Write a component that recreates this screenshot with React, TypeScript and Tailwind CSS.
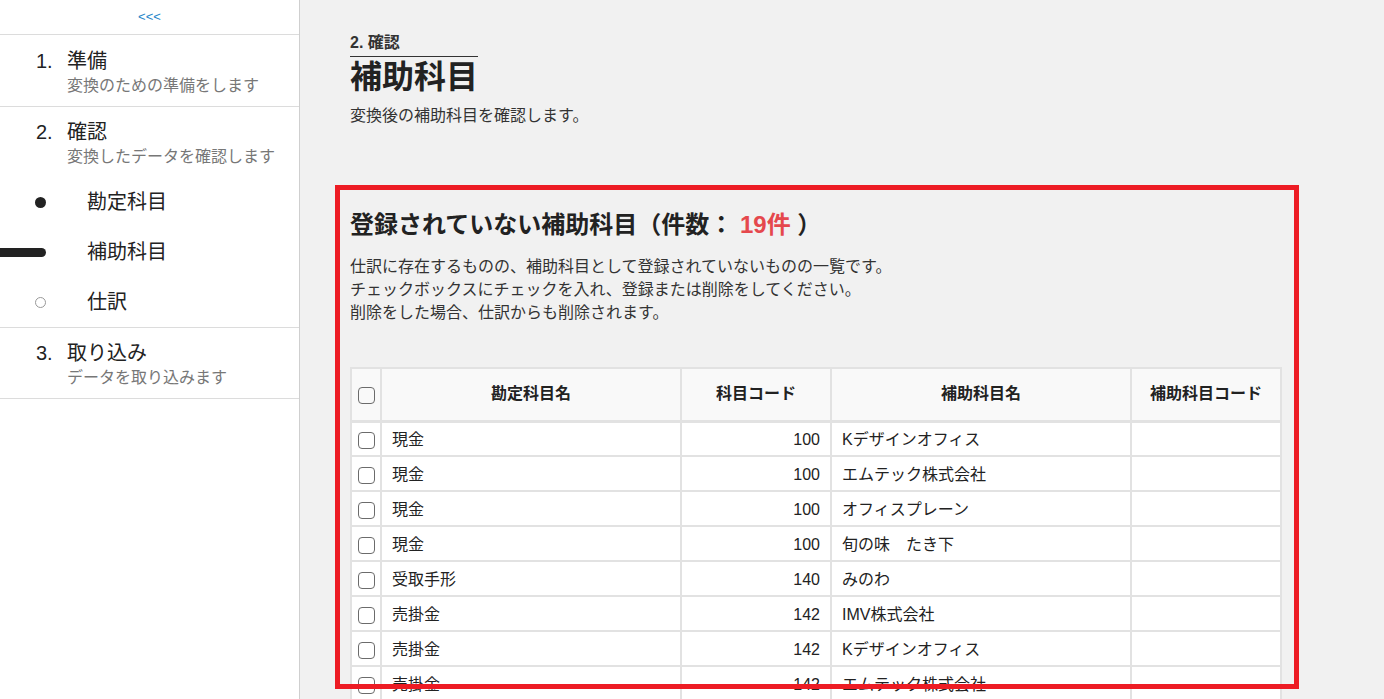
const rows = [
  { name: "現金", code: "100", sub: "Kデザインオフィス" },
  { name: "現金", code: "100", sub: "エムテック株式会社" },
  { name: "現金", code: "100", sub: "オフィスプレーン" },
  { name: "現金", code: "100", sub: "旬の味　たき下" },
  { name: "受取手形", code: "140", sub: "みのわ" },
  { name: "売掛金", code: "142", sub: "IMV株式会社" },
  { name: "売掛金", code: "142", sub: "Kデザインオフィス" },
  { name: "売掛金", code: "142", sub: "エムテック株式会社" },
  { name: "売掛金", code: "142", sub: "オフィスプレーン" },
  { name: "売掛金", code: "142", sub: "旬の味　たき下" },
];

function Checkbox() {
  return <span className="inline-block h-[17px] w-[17px] rounded-[4px] border border-[#6b6b6b] align-middle" />;
}

function Step({ num, title, desc }: { num: string; title: string; desc: string }) {
  return (
    <div className="flex pl-[36px]">
      <div className="w-[31px] text-[20px] leading-[24px]">{num}</div>
      <div>
        <div className="text-[20px] leading-[24px] text-[#222]">{title}</div>
        <div className="mt-[1px] text-[16px] leading-[24px] text-[#777]">{desc}</div>
      </div>
    </div>
  );
}

function Sidebar() {
  return (
    <aside className="h-full w-[300px] shrink-0 border-r border-[#cfcfcf] bg-white text-[#222]">
      <div className="flex h-[35px] items-center justify-center border-b border-[#dcdcdc] text-[13px] text-[#1f86c9]">
        &lt;&lt;&lt;
      </div>
      <div className="border-b border-[#dcdcdc] pt-[14px] pb-[8px]">
        <Step num="1." title="準備" desc="変換のための準備をします" />
      </div>
      <div className="border-b border-[#dcdcdc] pt-[13px]">
        <Step num="2." title="確認" desc="変換したデータを確認します" />
        <ul className="mt-[8px]">
          <li className="flex h-[50px] items-center">
            <span className="ml-[35px] h-[11px] w-[11px] rounded-full bg-[#222]" />
            <span className="ml-[41px] text-[20px]">勘定科目</span>
          </li>
          <li className="flex h-[50px] items-center">
            <span className="h-[9px] w-[46px] rounded-r-full bg-[#222]" />
            <span className="ml-[41px] text-[20px]">補助科目</span>
          </li>
          <li className="flex h-[50px] items-center">
            <span className="ml-[35px] h-[11px] w-[11px] rounded-full border border-[#999]" />
            <span className="ml-[41px] text-[20px]">仕訳</span>
          </li>
        </ul>
      </div>
      <div className="border-b border-[#dcdcdc] pt-[13px] pb-[8px]">
        <Step num="3." title="取り込み" desc="データを取り込みます" />
      </div>
    </aside>
  );
}

export default function App() {
  return (
    <div
      className="flex h-[699px] overflow-hidden bg-[#f1f1f1] text-[#333]"
      style={{ fontFamily: '"Liberation Sans", "Noto Sans CJK JP", sans-serif' }}
    >
      <Sidebar />
      <main className="relative flex-1 pl-[50px] pt-[31px]">
        <div className="w-[128px] border-b border-[#333] pb-[1px] text-[16px] font-bold leading-[24px]">2. 確認</div>
        <h1 className="text-[32px] font-bold leading-[40px] text-[#222]">補助科目</h1>
        <p className="mt-[7px] text-[16px] leading-[24px]">変換後の補助科目を確認します。</p>

        <section className="mt-[81px]">
          <h2 className="text-[24px] font-bold leading-[32px] text-[#222]">
            登録されていない補助科目（件数： <span className="text-[#e5484d]">19件</span> ）
          </h2>
          <div className="mt-[14px] text-[16px] leading-[23px]">
            <p>仕訳に存在するものの、補助科目として登録されていないものの一覧です。</p>
            <p>チェックボックスにチェックを入れ、登録または削除をしてください。</p>
            <p>削除をした場合、仕訳からも削除されます。</p>
          </div>

          <table className="mt-[43px] w-[930px] table-fixed border-collapse text-[16px]">
            <colgroup>
              <col className="w-[30px]" />
              <col className="w-[300px]" />
              <col className="w-[150px]" />
              <col className="w-[300px]" />
              <col className="w-[150px]" />
            </colgroup>
            <thead>
              <tr className="h-[53px] bg-[#f9f9f9] font-bold text-[#222]">
                <th className="border-2 border-b-[3px] border-[#e2e2e2] text-center">
                  <Checkbox />
                </th>
                <th className="border-2 border-b-[3px] border-[#e2e2e2]">勘定科目名</th>
                <th className="border-2 border-b-[3px] border-[#e2e2e2]">科目コード</th>
                <th className="border-2 border-b-[3px] border-[#e2e2e2]">補助科目名</th>
                <th className="border-2 border-b-[3px] border-[#e2e2e2]">補助科目コード</th>
              </tr>
            </thead>
            <tbody>
              {rows.map((r, i) => (
                <tr key={i} className="h-[35px] bg-white text-[#222]">
                  <td className="border-2 border-[#e2e2e2] pt-[2px] text-center">
                    <Checkbox />
                  </td>
                  <td className="border-2 border-[#e2e2e2] px-[10px] pt-[2px]">{r.name}</td>
                  <td className="border-2 border-[#e2e2e2] px-[10px] pt-[2px] text-right">{r.code}</td>
                  <td className="border-2 border-[#e2e2e2] px-[10px] pt-[2px]">{r.sub}</td>
                  <td className="border-2 border-[#e2e2e2] px-[10px]"></td>
                </tr>
              ))}
            </tbody>
          </table>
        </section>

        <div className="pointer-events-none absolute left-[35px] top-[185px] h-[504px] w-[964px] border-[5px] border-[#ed1c24]" />
      </main>
    </div>
  );
}
